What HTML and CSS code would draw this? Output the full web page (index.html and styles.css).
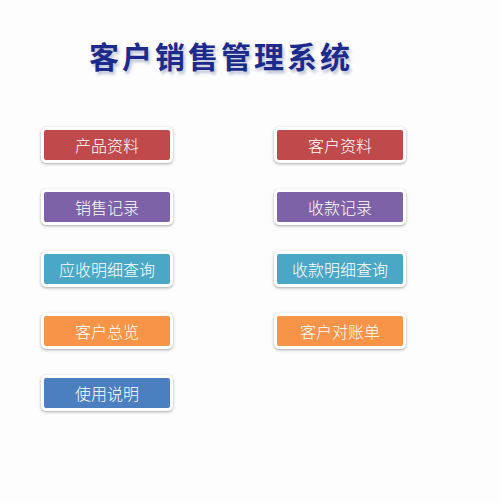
FILE: index.html
```html
<!DOCTYPE html>
<html lang="zh-CN">
<head>
    <meta charset="UTF-8">
    <meta name="viewport" content="width=device-width, initial-scale=1.0">
    <title>客户销售管理系统</title>
    <link rel="stylesheet" href="styles.css">
</head>
<body>
    <div class="page">
        <h1 class="title">客户销售管理系统</h1>

        <div class="menu">
            <button class="btn red">产品资料</button>
            <button class="btn red">客户资料</button>

            <button class="btn purple">销售记录</button>
            <button class="btn purple">收款记录</button>

            <button class="btn aqua">应收明细查询</button>
            <button class="btn aqua">收款明细查询</button>

            <button class="btn orange">客户总览</button>
            <button class="btn orange">客户对账单</button>

            <button class="btn blue">使用说明</button>
        </div>
    </div>
</body>
</html>
```

FILE: styles.css
```css
body {
    margin: 0;
    background-color: #fdfdfd;
    font-family: "Noto Sans CJK SC", "Noto Sans", sans-serif;
}
.page {
    width: 500px;
    height: 503px;
    padding-top: 37px;
    box-sizing: border-box;
}
.title {
    margin: 0 0 0 89px;
    font-size: 30px;
    line-height: 36px;
    font-weight: 700;
    letter-spacing: 3px;
    color: #1c2a8c;
    text-shadow: 2px 3px 3px rgba(100, 110, 160, 0.4);
}
.menu {
    display: grid;
    grid-template-columns: 132px 132px;
    column-gap: 101px;
    row-gap: 26px;
    margin: 54px 0 0 41px;
}
.btn {
    height: 36px;
    border: 3px solid #fff;
    border-radius: 5px;
    box-shadow: 0 1px 3px rgba(0, 0, 0, 0.35);
    color: #fff;
    font-family: "Noto Sans CJK SC", "Noto Sans", sans-serif;
    font-size: 16px;
    font-weight: 300;
    line-height: 28px;
    padding: 0;
    cursor: pointer;
}
.red {
    background-color: #c0494b;
}
.purple {
    background-color: #7e62a8;
}
.aqua {
    background-color: #4aa8c6;
}
.orange {
    background-color: #f79447;
}
.blue {
    background-color: #4c7fc0;
}
```
